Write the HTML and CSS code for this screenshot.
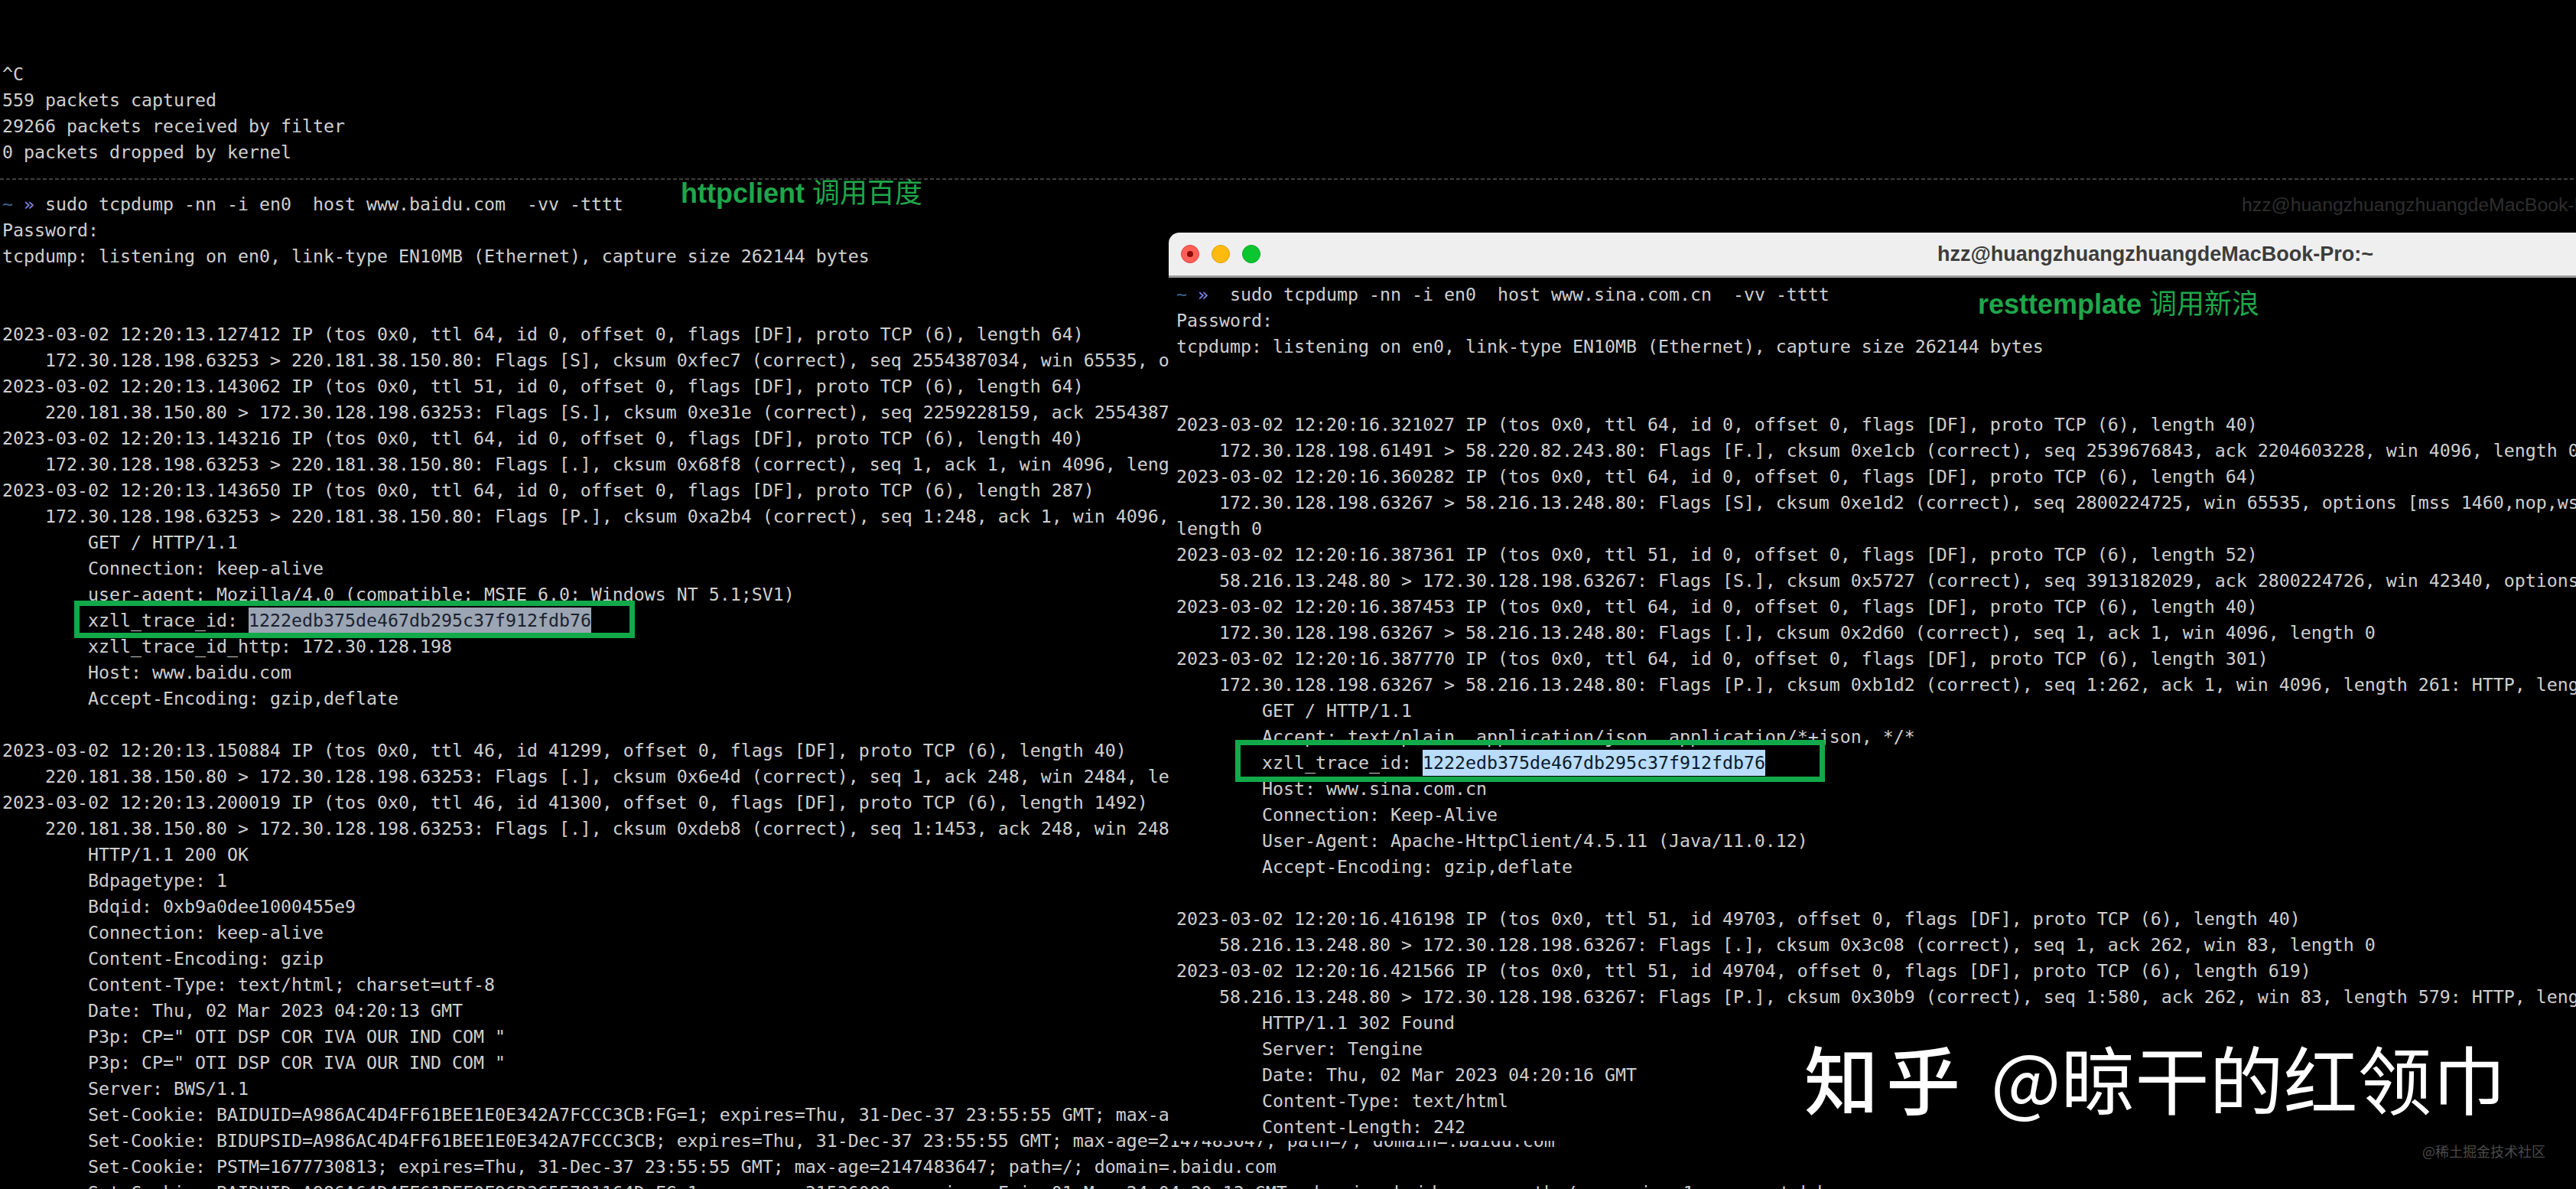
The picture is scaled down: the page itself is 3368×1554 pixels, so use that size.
FILE: index.html
```html
<!DOCTYPE html>
<html lang="zh-CN">
<head>
<meta charset="utf-8">
<title>tcpdump</title>
<link rel="stylesheet" href="styles.css">
</head>
<body>
<main class="desktop">
  <section class="backdrop">
    <pre class="log">^C
559 packets captured
29266 packets received by filter
0 packets dropped by kernel</pre>
    <div class="rule"><div class="rule-dash"></div></div>
    <pre class="log"><span class="tilde">~</span> <span class="chev">»</span> sudo tcpdump -nn -i en0  host www.baidu.com  -vv -tttt
Password:
tcpdump: listening on en0, link-type EN10MB (Ethernet), capture size 262144 bytes


2023-03-02 12:20:13.127412 IP (tos 0x0, ttl 64, id 0, offset 0, flags [DF], proto TCP (6), length 64)
    172.30.128.198.63253 &gt; 220.181.38.150.80: Flags [S], cksum 0xfec7 (correct), seq 2554387034, win 65535, options [mss 1460,nop,wscale 6]
2023-03-02 12:20:13.143062 IP (tos 0x0, ttl 51, id 0, offset 0, flags [DF], proto TCP (6), length 64)
    220.181.38.150.80 &gt; 172.30.128.198.63253: Flags [S.], cksum 0xe31e (correct), seq 2259228159, ack 2554387035, win 8192, options [mss 1452]
2023-03-02 12:20:13.143216 IP (tos 0x0, ttl 64, id 0, offset 0, flags [DF], proto TCP (6), length 40)
    172.30.128.198.63253 &gt; 220.181.38.150.80: Flags [.], cksum 0x68f8 (correct), seq 1, ack 1, win 4096, length 0
2023-03-02 12:20:13.143650 IP (tos 0x0, ttl 64, id 0, offset 0, flags [DF], proto TCP (6), length 287)
    172.30.128.198.63253 &gt; 220.181.38.150.80: Flags [P.], cksum 0xa2b4 (correct), seq 1:248, ack 1, win 4096, length 247: HTTP
        GET / HTTP/1.1
        Connection: keep-alive
        user-agent: Mozilla/4.0 (compatible; MSIE 6.0; Windows NT 5.1;SV1)
        xzll_trace_id: <span class="sel-dim">1222edb375de467db295c37f912fdb76</span>
        xzll_trace_id_http: 172.30.128.198
        Host: www.baidu.com
        Accept-Encoding: gzip,deflate

2023-03-02 12:20:13.150884 IP (tos 0x0, ttl 46, id 41299, offset 0, flags [DF], proto TCP (6), length 40)
    220.181.38.150.80 &gt; 172.30.128.198.63253: Flags [.], cksum 0x6e4d (correct), seq 1, ack 248, win 2484, length 0
2023-03-02 12:20:13.200019 IP (tos 0x0, ttl 46, id 41300, offset 0, flags [DF], proto TCP (6), length 1492)
    220.181.38.150.80 &gt; 172.30.128.198.63253: Flags [.], cksum 0xdeb8 (correct), seq 1:1453, ack 248, win 2484, length 1452: HTTP
        HTTP/1.1 200 OK
        Bdpagetype: 1
        Bdqid: 0xb9a0dee1000455e9
        Connection: keep-alive
        Content-Encoding: gzip
        Content-Type: text/html; charset=utf-8
        Date: Thu, 02 Mar 2023 04:20:13 GMT
        P3p: CP=" OTI DSP COR IVA OUR IND COM "
        P3p: CP=" OTI DSP COR IVA OUR IND COM "
        Server: BWS/1.1
        Set-Cookie: BAIDUID=A986AC4D4FF61BEE1E0E342A7FCCC3CB:FG=1; expires=Thu, 31-Dec-37 23:55:55 GMT; max-age=2147483647; path=/; domain=.baidu.com
        Set-Cookie: BIDUPSID=A986AC4D4FF61BEE1E0E342A7FCCC3CB; expires=Thu, 31-Dec-37 23:55:55 GMT; max-age=2147483647; path=/; domain=.baidu.com
        Set-Cookie: PSTM=1677730813; expires=Thu, 31-Dec-37 23:55:55 GMT; max-age=2147483647; path=/; domain=.baidu.com
        Set-Cookie: BAIDUID=A986A64D4FF61BEF0F96D3655701164D:FG=1; max-age=31536000; expires=Fri, 01-Mar-24 04:20:13 GMT; domain=.baidu.com; path=/; version=1; comment=bd</pre>
  </section>

  <div class="ghost-title">hzz@huangzhuangzhuangdeMacBook-Pro:~</div>
  <div class="tag tag-left"><b>httpclient</b> 调用百度</div>

  <section class="window">
    <header class="titlebar">
      <span class="light light-red"></span>
      <span class="light light-yellow"></span>
      <span class="light light-green"></span>
      <span class="title">hzz@huangzhuangzhuangdeMacBook-Pro:~</span>
    </header>
    <pre class="log log-window"><span class="tilde">~</span> <span class="chev">»</span>  sudo tcpdump -nn -i en0  host www.sina.com.cn  -vv -tttt
Password:
tcpdump: listening on en0, link-type EN10MB (Ethernet), capture size 262144 bytes


2023-03-02 12:20:16.321027 IP (tos 0x0, ttl 64, id 0, offset 0, flags [DF], proto TCP (6), length 40)
    172.30.128.198.61491 &gt; 58.220.82.243.80: Flags [F.], cksum 0xe1cb (correct), seq 2539676843, ack 2204603228, win 4096, length 0
2023-03-02 12:20:16.360282 IP (tos 0x0, ttl 64, id 0, offset 0, flags [DF], proto TCP (6), length 64)
    172.30.128.198.63267 &gt; 58.216.13.248.80: Flags [S], cksum 0xe1d2 (correct), seq 2800224725, win 65535, options [mss 1460,nop,wscale 6,nop]
length 0
2023-03-02 12:20:16.387361 IP (tos 0x0, ttl 51, id 0, offset 0, flags [DF], proto TCP (6), length 52)
    58.216.13.248.80 &gt; 172.30.128.198.63267: Flags [S.], cksum 0x5727 (correct), seq 3913182029, ack 2800224726, win 42340, options [mss 1460]
2023-03-02 12:20:16.387453 IP (tos 0x0, ttl 64, id 0, offset 0, flags [DF], proto TCP (6), length 40)
    172.30.128.198.63267 &gt; 58.216.13.248.80: Flags [.], cksum 0x2d60 (correct), seq 1, ack 1, win 4096, length 0
2023-03-02 12:20:16.387770 IP (tos 0x0, ttl 64, id 0, offset 0, flags [DF], proto TCP (6), length 301)
    172.30.128.198.63267 &gt; 58.216.13.248.80: Flags [P.], cksum 0xb1d2 (correct), seq 1:262, ack 1, win 4096, length 261: HTTP, length: 261
        GET / HTTP/1.1
        Accept: text/plain, application/json, application/*+json, */*
        xzll_trace_id: <span class="sel-bright">1222edb375de467db295c37f912fdb76</span>
        Host: www.sina.com.cn
        Connection: Keep-Alive
        User-Agent: Apache-HttpClient/4.5.11 (Java/11.0.12)
        Accept-Encoding: gzip,deflate

2023-03-02 12:20:16.416198 IP (tos 0x0, ttl 51, id 49703, offset 0, flags [DF], proto TCP (6), length 40)
    58.216.13.248.80 &gt; 172.30.128.198.63267: Flags [.], cksum 0x3c08 (correct), seq 1, ack 262, win 83, length 0
2023-03-02 12:20:16.421566 IP (tos 0x0, ttl 51, id 49704, offset 0, flags [DF], proto TCP (6), length 619)
    58.216.13.248.80 &gt; 172.30.128.198.63267: Flags [P.], cksum 0x30b9 (correct), seq 1:580, ack 262, win 83, length 579: HTTP, length: 579
        HTTP/1.1 302 Found
        Server: Tengine
        Date: Thu, 02 Mar 2023 04:20:16 GMT
        Content-Type: text/html
        Content-Length: 242</pre>
  </section>

  <div class="tag tag-right"><b>resttemplate</b> 调用新浪</div>
  <div class="frame frame-left"></div>
  <div class="frame frame-right"></div>
  <div class="mark"><span class="mark-brand">知乎</span> <span class="mark-name">@晾干的红领巾</span></div>
  <div class="juejin">@稀土掘金技术社区</div>
</main>
</body>
</html>
```
FILE: styles.css
```css
* { box-sizing: border-box; }

html, body {
  margin: 0;
  background: #000;
}

.desktop {
  position: relative;
  width: 3368px;
  height: 1554px;
  overflow: hidden;
  background: #000;
}

.backdrop {
  padding: 80px 0 0 3px;
  white-space: nowrap;
}

.log {
  margin: 0;
  font-family: "DejaVu Sans Mono", "Liberation Mono", monospace;
  font-size: 23.25px;
  line-height: 34px;
  color: #cfcfcf;
  white-space: pre;
}

.rule {
  height: 34px;
  margin-left: -3px;
  padding-top: 2px;
  display: flex;
  align-items: center;
}

.rule-dash {
  width: 100%;
  height: 2px;
  background-image: repeating-linear-gradient(90deg, #3f3f3f 0 5px, transparent 5px 8px);
}

.tilde { color: #3f648f; }
.chev { color: #8484e6; }

.sel-dim,
.sel-bright {
  display: inline-block;
  line-height: 34px;
}

.sel-dim {
  background: #9ba5b3;
  color: #1a2230;
}

.sel-bright {
  background: #b9dcfa;
  color: #0c1a28;
}

.ghost-title {
  position: absolute;
  top: 252px;
  left: 2931px;
  font-family: "Liberation Sans", Arial, sans-serif;
  font-size: 24.8px;
  line-height: 32px;
  color: #2e2e2e;
  white-space: nowrap;
}

.tag {
  position: absolute;
  font-family: "Liberation Sans", "Noto Sans CJK SC", sans-serif;
  font-size: 36px;
  line-height: 44px;
  color: #1fa64a;
  white-space: nowrap;
}

.tag-left { top: 231px; left: 890px; }
.tag-right { top: 376px; left: 2586px; }

.window {
  position: absolute;
  top: 304px;
  left: 1528px;
  right: 0;
  height: 1187px;
  overflow: hidden;
  background: #000;
  border-top-left-radius: 14px;
}

.titlebar {
  display: flex;
  align-items: center;
  gap: 16px;
  height: 59px;
  padding-left: 16px;
  background: #efefef;
  border-bottom: 3px solid #9c9c9c;
}

.light {
  flex: none;
  width: 24px;
  height: 24px;
  border-radius: 50%;
}

.light-red {
  display: flex;
  align-items: center;
  justify-content: center;
  background: #ff5f57;
  border: 1px solid #e0443e;
}

.light-red::after {
  content: "";
  width: 8px;
  height: 8px;
  border-radius: 50%;
  background: #8c0a04;
}

.light-yellow { background: #febb0d; border: 1px solid #e0a00f; }
.light-green { background: #0bc62f; border: 1px solid #0aa527; }

.title {
  margin-left: 869px;
  font-family: "Liberation Sans", Arial, sans-serif;
  font-size: 27px;
  font-weight: 700;
  color: #3c3c3c;
  white-space: nowrap;
}

.log-window {
  padding: 5px 0 0 10px;
}

.frame {
  position: absolute;
  border: 7px solid #12a94a;
}

.frame-left { top: 785px; left: 97px; width: 733px; height: 49px; }
.frame-right { top: 967px; left: 1615px; width: 771px; height: 55px; }

.mark {
  position: absolute;
  top: 1337px;
  left: 2359px;
  font-family: "Noto Sans CJK SC", sans-serif;
  font-size: 97px;
  line-height: 140px;
  color: #fff;
  white-space: nowrap;
}

.mark-brand {
  font-weight: 500;
  letter-spacing: 10px;
}

.mark-name {
  margin-left: 8px;
}

.juejin {
  position: absolute;
  top: 1492px;
  left: 3167px;
  font-family: "Noto Sans CJK SC", sans-serif;
  font-size: 18px;
  line-height: 24px;
  color: #4a4a4a;
  white-space: nowrap;
}
```
